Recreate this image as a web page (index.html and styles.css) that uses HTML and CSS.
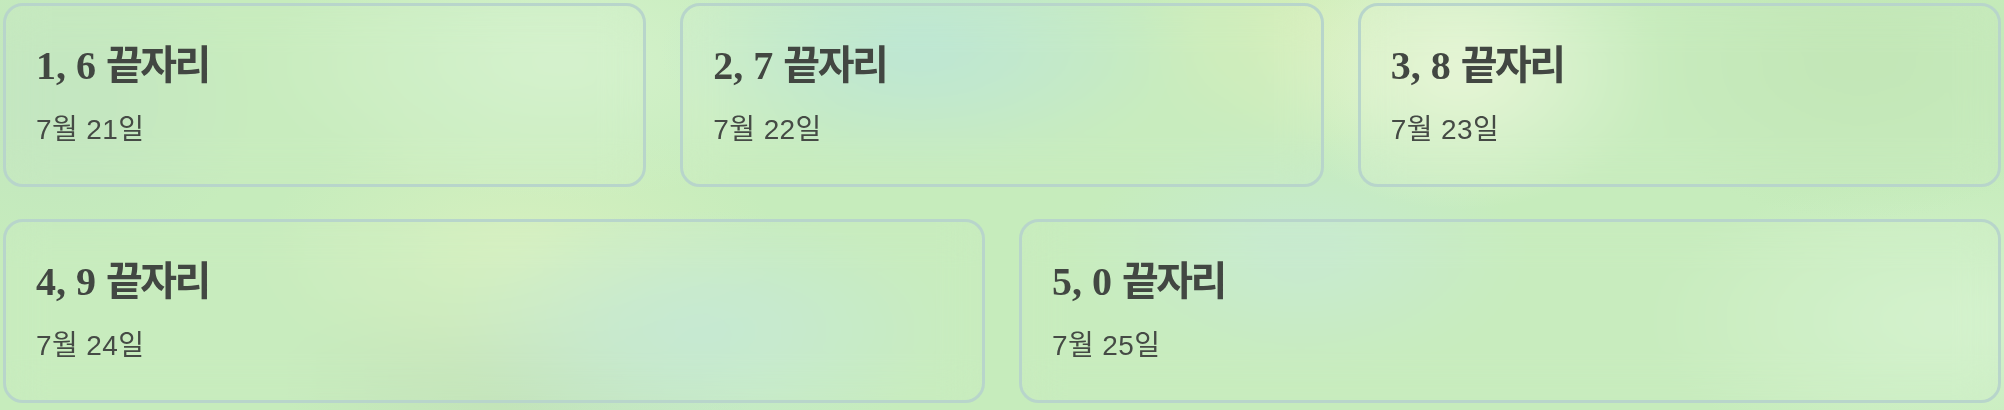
FILE: index.html
```html
<!DOCTYPE html>
<html lang="ko">
<head>
<meta charset="utf-8">
<title>끝자리</title>
<link rel="stylesheet" href="styles.css">
</head>
<body>
<main class="grid">
  <section class="card span2">
    <h2 class="title">1, 6 <span class="ko">끝자리</span></h2>
    <p class="date">7월 21일</p>
  </section>
  <section class="card span2">
    <h2 class="title">2, 7 <span class="ko">끝자리</span></h2>
    <p class="date">7월 22일</p>
  </section>
  <section class="card span2">
    <h2 class="title">3, 8 <span class="ko">끝자리</span></h2>
    <p class="date">7월 23일</p>
  </section>
  <section class="card span3">
    <h2 class="title">4, 9 <span class="ko">끝자리</span></h2>
    <p class="date">7월 24일</p>
  </section>
  <section class="card span3">
    <h2 class="title">5, 0 <span class="ko">끝자리</span></h2>
    <p class="date">7월 25일</p>
  </section>
</main>
</body>
</html>
```
FILE: styles.css
```css
html, body {
  margin: 0;
  height: 100%;
}
body {
  padding: 3px;
  box-sizing: border-box;
  background:
    radial-gradient(ellipse 260px 120px at 920px 50px, #bbe6d5 0%, rgba(187,230,213,0) 100%),
    radial-gradient(ellipse 200px 140px at 1460px 70px, #e8f6d7 0%, rgba(232,246,215,0) 100%),
    radial-gradient(ellipse 160px 120px at 1300px 30px, #d4eeb8 0%, rgba(212,238,184,0) 100%),
    radial-gradient(ellipse 240px 160px at 1860px 60px, #c0e6b4 0%, rgba(192,230,180,0) 100%),
    radial-gradient(ellipse 300px 140px at 560px 60px, #d5f2cc 0%, rgba(213,242,204,0) 100%),
    radial-gradient(ellipse 260px 120px at 700px 330px, #c4e9d4 0%, rgba(196,233,212,0) 100%),
    radial-gradient(ellipse 260px 140px at 520px 250px, #d6f0bf 0%, rgba(214,240,191,0) 100%),
    radial-gradient(ellipse 240px 120px at 520px 380px, #c2e2b8 0%, rgba(194,226,184,0) 100%),
    radial-gradient(ellipse 300px 150px at 1950px 320px, #d4f2cc 0%, rgba(212,242,204,0) 100%),
    radial-gradient(ellipse 220px 120px at 1300px 250px, #c6ead0 0%, rgba(198,234,208,0) 100%),
    radial-gradient(ellipse 200px 160px at 60px 100px, #c1e5bf 0%, rgba(193,229,191,0) 100%),
    #c6ecbc;
}
.grid {
  display: grid;
  grid-template-columns: repeat(6, 1fr);
  column-gap: 34px;
  row-gap: 32px;
}
.span2 { grid-column: span 2; }
.span3 { grid-column: span 3; }
.card {
  border: 3px solid #b8d5cb;
  border-radius: 20px;
  padding: 36px 30px 37px;
  background: rgba(255, 255, 255, 0.04);
  backdrop-filter: blur(20px);
  color: #454a45;
}
.title {
  margin: 0;
  font-family: "Liberation Serif", "Noto Sans CJK KR", serif;
  font-weight: 700;
  font-size: 40px;
  line-height: 48px;
  height: 48px;
  color: #424742;
}
.ko {
  font-family: "Noto Sans CJK KR", sans-serif;
  letter-spacing: -2.5px;
  line-height: 1;
}
.date {
  margin: 23px 0 0;
  font-family: "Liberation Sans", "Noto Sans CJK KR", sans-serif;
  font-size: 28px;
  letter-spacing: 0.4px;
  line-height: 34px;
  height: 34px;
  color: #454a45;
}
```
